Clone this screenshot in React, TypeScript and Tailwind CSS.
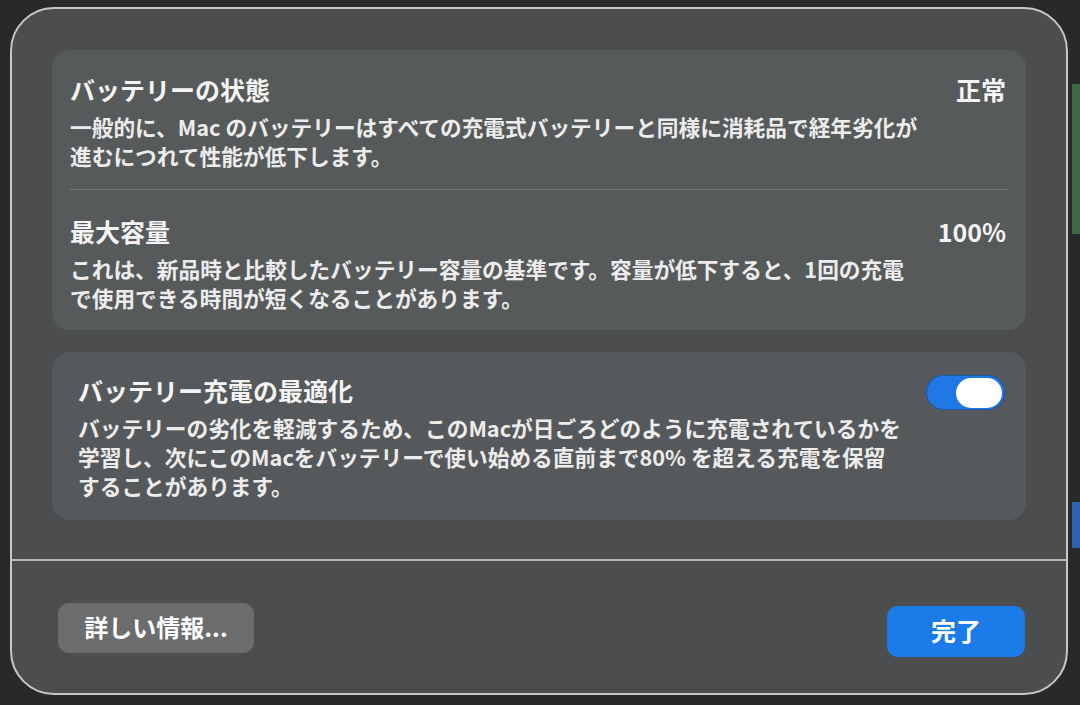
import React from "react";

const font = { fontFamily: '"Noto Sans CJK JP", "Noto Sans", sans-serif' };

function Toggle() {
  return (
    <div className="flex h-[35px] w-[79px] items-center justify-end rounded-full bg-[#1f78e4] px-[3px] shadow-[inset_0_0_0_1px_rgba(0,0,0,0.25)]">
      <div className="h-[30px] w-[46px] rounded-full bg-white" />
    </div>
  );
}

function Row({
  title,
  lines,
  right,
}: {
  title: string;
  lines: string[];
  right: React.ReactNode;
}) {
  return (
    <div className="flex items-start justify-between">
      <div>
        <div className="text-[25px] font-bold leading-[30px] text-[#f4f4f4]">
          {title}
        </div>
        <div className="mt-[8px] text-[21.7px] font-bold leading-[29px] text-[#ececec]">
          {lines.map((l) => (
            <div key={l} className="whitespace-nowrap">
              {l}
            </div>
          ))}
        </div>
      </div>
      {right}
    </div>
  );
}

export default function App() {
  return (
    <div
      className="relative h-[705px] w-[1080px] overflow-hidden bg-[#27292b] pl-[10px] pt-[7px]"
      style={font}
    >
      {/* windows behind the sheet */}
      <div className="absolute right-0 top-[84px] h-[150px] w-[8px] bg-[#3d6a45]" />
      <div className="absolute right-0 top-[502px] h-[46px] w-[8px] bg-[#2d64b0]" />

      <div className="relative flex h-[688px] w-[1058px] flex-col rounded-[44px] border-2 border-[#c6c7c8] bg-[#4b4d4e]">
        <div className="flex flex-col gap-[22px] px-[40px] pt-[41px]">
          {/* card 1 */}
          <div className="flex h-[280px] flex-col rounded-[18px] bg-[#575a5b] px-[18px] pt-[24px]">
            <Row
              title="バッテリーの状態"
              lines={[
                "一般的に、Mac のバッテリーはすべての充電式バッテリーと同様に消耗品で経年劣化が",
                "進むにつれて性能が低下します。",
              ]}
              right={
                <div className="pr-[2px] text-[25px] font-bold leading-[30px] text-[#f4f4f4]">
                  正常
                </div>
              }
            />
            <div className="mt-[19px] h-px bg-[#737678]" />
            <div className="pt-[26px]">
              <Row
                title="最大容量"
                lines={[
                  "これは、新品時と比較したバッテリー容量の基準です。容量が低下すると、1回の充電",
                  "で使用できる時間が短くなることがあります。",
                ]}
                right={
                  <div className="pr-[2px] text-[25px] font-bold leading-[30px] text-[#f4f4f4]">
                    100%
                  </div>
                }
              />
            </div>
          </div>

          {/* card 2 */}
          <div className="flex h-[168px] flex-col rounded-[18px] bg-[#56595b] pl-[26px] pr-[21px] pt-[23px]">
            <Row
              title="バッテリー充電の最適化"
              lines={[
                "バッテリーの劣化を軽減するため、このMacが日ごろどのように充電されているかを",
                "学習し、次にこのMacをバッテリーで使い始める直前まで80% を超える充電を保留",
                "することがあります。",
              ]}
              right={<Toggle />}
            />
          </div>
        </div>

        <div className="mt-[39px] h-[2px] bg-[#b4b6b7]" />

        <div className="flex items-start justify-between pl-[46px] pr-[41px] pt-[42px]">
          <div className="flex h-[50px] w-[196px] items-center justify-center rounded-[11px] bg-[#6a6c6d] pb-[2px] text-[24px] font-bold text-white">
            詳しい情報...
          </div>
          <div className="mt-[3px] flex h-[51px] w-[138px] items-center justify-center rounded-[11px] bg-[#1b7ce9] pb-[2px] text-[25px] font-bold text-white">
            完了
          </div>
        </div>
      </div>
    </div>
  );
}
